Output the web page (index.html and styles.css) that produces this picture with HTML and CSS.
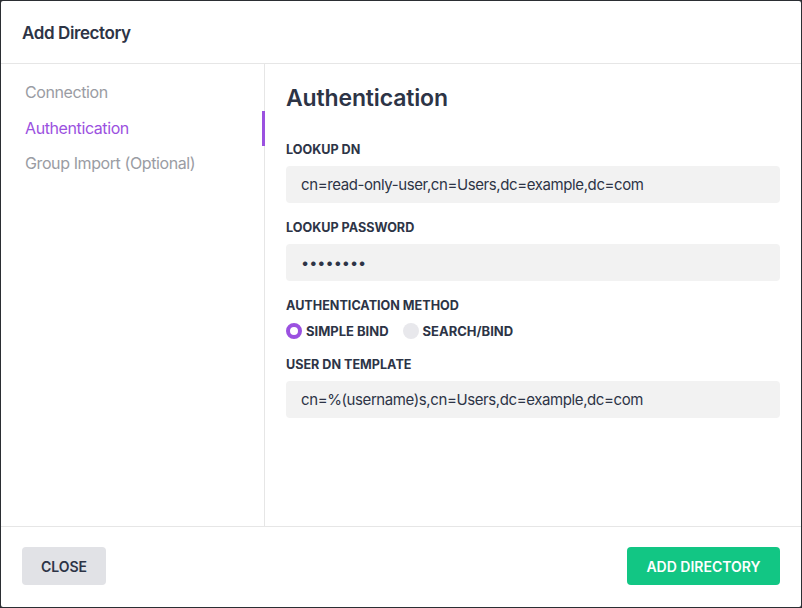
FILE: index.html
```html
<!DOCTYPE html>
<html>
<head>
<meta charset="utf-8">
<link rel="stylesheet" href="styles.css">
</head>
<body>
<div class="modal">
  <header class="head">Add Directory</header>
  <div class="body">
    <nav class="side">
      <div class="item">Connection</div>
      <div class="item active">Authentication</div>
      <div class="item">Group Import (Optional)</div>
    </nav>
    <main class="main">
      <h1 class="title">Authentication</h1>
      <div class="field">
        <div class="label">LOOKUP DN</div>
        <div class="input">cn=read-only-user,cn=Users,dc=example,dc=com</div>
      </div>
      <div class="field">
        <div class="label">LOOKUP PASSWORD</div>
        <div class="input pw">••••••••</div>
      </div>
      <div class="field">
        <div class="label">AUTHENTICATION METHOD</div>
        <div class="radios">
          <span class="radio on"></span><span class="rlabel">SIMPLE BIND</span>
          <span class="radio"></span><span class="rlabel">SEARCH/BIND</span>
        </div>
      </div>
      <div class="field">
        <div class="label">USER DN TEMPLATE</div>
        <div class="input">cn=%(username)s,cn=Users,dc=example,dc=com</div>
      </div>
    </main>
  </div>
  <footer class="foot">
    <button class="btn close">CLOSE</button>
    <button class="btn add">ADD DIRECTORY</button>
  </footer>
</div>
</body>
</html>
```
FILE: styles.css
```css
* { box-sizing: border-box; }
html, body { margin: 0; padding: 0; }
body {
  width: 802px; height: 608px;
  background: #2b2e33;
  font-family: Inter, "Noto Sans", sans-serif;
  color: #2d3446;
}
.modal {
  width: 800px; height: 606px;
  margin: 1px 0 0 1px;
  background: #fff;
  display: flex; flex-direction: column;
  border-radius: 2px;
}
.head {
  height: 63px;
  border-bottom: 1px solid #e6e6e6;
  padding: 1px 21px 0;
  display: flex; align-items: center;
  font-size: 17px; font-weight: 600;
  letter-spacing: -0.4px;
}
.body { flex: 1; display: flex; }
.side {
  width: 264px;
  border-right: 1px solid #e6e6e6;
  padding-top: 11px;
}
.item {
  height: 35.5px; line-height: 35.5px;
  padding-left: 24px;
  font-size: 16px;
  letter-spacing: -0.4px;
  color: #9a9ca3;
}
.item.active {
  color: #9b51e0;
  box-shadow: inset -3px 0 0 #9b51e0;
  margin-right: -1px;
}
.main { flex: 1; padding: 19px 21px 0 21px; }
.title {
  margin: 0 0 27px 0;
  font-size: 23px; font-weight: 600;
  line-height: 30px;
  letter-spacing: -0.15px;
}
.field { margin-bottom: 15px; }
.label {
  font-size: 12.6px; font-weight: 700;
  line-height: 16px;
  padding-top: 2px;
  margin-bottom: 8px;
}
.input {
  height: 37px;
  background: #f2f2f2;
  border-radius: 4px;
  padding: 0 15px;
  display: flex; align-items: center;
  font-size: 15px;
  letter-spacing: -0.4px;
}
.input.pw { letter-spacing: 0; font-size: 14.5px; }
.radios { display: flex; align-items: center; height: 18px; margin-top: 0; }
.radio {
  width: 16px; height: 16px; border-radius: 50%;
  background: #e8e8ec;
  margin-right: 4px;
}
.radio.on { border: 4px solid #9b51e0; background: #fff; }
.rlabel { font-size: 13px; font-weight: 700; margin-right: 14px; }
.foot {
  height: 81px;
  border-top: 1px solid #e6e6e6;
  display: flex; align-items: center; justify-content: space-between;
  padding: 0 21px 2px;
}
.btn {
  height: 38px; border: none; border-radius: 4px;
  font-family: inherit; font-size: 14px; font-weight: 600;
  padding: 0;
}
.close { background: #e1e2e6; color: #2d3446; width: 84px; }
.add { background: #12c684; color: #fff; width: 153px; }
```
